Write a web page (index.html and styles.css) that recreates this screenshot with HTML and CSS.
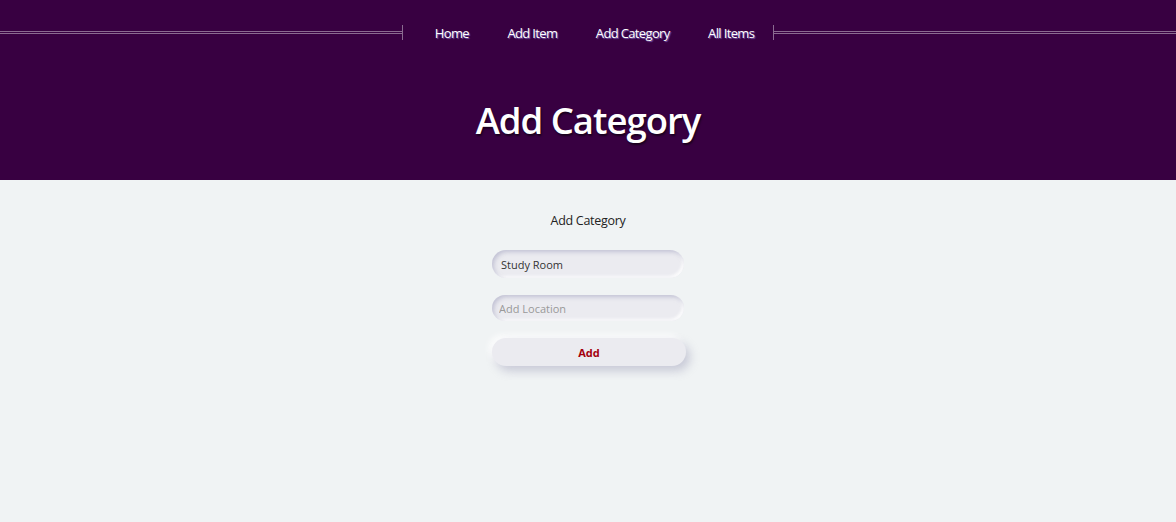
FILE: index.html
```html
<!DOCTYPE html>
<html>
<head>
<meta charset="utf-8">
<link rel="stylesheet" href="styles.css">
</head>
<body>
<header class="hero">
  <nav class="nav">
    <span class="rule rule-left"></span>
    <ul class="links">
      <li><a href="#">Home</a></li>
      <li><a href="#">Add Item</a></li>
      <li><a href="#">Add Category</a></li>
      <li><a href="#">All Items</a></li>
    </ul>
    <span class="rule rule-right"></span>
  </nav>
  <h1 class="title">Add Category</h1>
</header>
<main class="content">
  <form class="form">
    <p class="form-title">Add Category</p>
    <input class="field" type="text" value="Study Room">
    <input class="field" type="text" placeholder="Add Location">
    <button class="btn" type="button">Add</button>
  </form>
</main>
</body>
</html>
```
FILE: styles.css
```css
* { box-sizing: border-box; }
html, body { margin: 0; padding: 0; }
body {
  font-family: "Open Sans", "Noto Sans", sans-serif;
  background: #f0f3f4;
  width: 1176px;
  height: 522px;
  overflow: hidden;
}
.hero {
  background: #380041;
  height: 180px;
  padding-top: 17px;
}
.nav {
  display: flex;
  align-items: center;
  height: 30px;
}
.rule {
  flex: 1;
  height: 3px;
  border-top: 1px solid #8a6a90;
  border-bottom: 1px solid #8a6a90;
  position: relative;
}
.rule-left::after, .rule-right::before {
  content: "";
  position: absolute;
  top: -7px;
  width: 1px;
  height: 15px;
  background: #8a6a90;
}
.rule-left::after { right: 0; }
.rule-right::before { left: 0; }
.links {
  list-style: none;
  margin: 0;
  padding: 0 19px 0 32px;
  display: flex;
  gap: 38.5px;
}
.links a {
  color: #fff;
  text-decoration: none;
  font-size: 13px;
  letter-spacing: -0.65px;
  text-shadow: 1px 1px 1px rgba(140, 120, 220, 0.7);
}
.title {
  margin: 48px 0 0;
  text-align: center;
  color: #fff;
  font-size: 36.5px;
  font-weight: 600;
  letter-spacing: -1px;
  text-shadow: 1px 2px 2px rgba(0, 0, 0, 0.55);
}
.content {
  display: flex;
  justify-content: center;
}
.form {
  width: 192px;
  display: flex;
  flex-direction: column;
  align-items: stretch;
}
.form-title {
  margin: 32px 0 21px;
  text-align: center;
  font-size: 12.5px;
  color: #222;
  letter-spacing: -0.3px;
}
.field {
  height: 28px;
  border: none;
  border-radius: 14px;
  background: #ebebf0;
  box-shadow: inset 2px 2px 4px rgba(160, 160, 190, 0.55), inset -2px -2px 3px rgba(255, 255, 255, 0.9);
  padding: 0 9px;
  font-family: inherit;
  font-size: 11px;
  color: #333;
  margin-bottom: 17px;
  outline: none;
}
.field::placeholder { color: #999; }
.field + .field { padding-left: 7px; height: 26px; margin-bottom: 17px; }
.btn {
  height: 28px;
  width: 194px;
  border: none;
  border-radius: 14px;
  background: #ebebf0;
  box-shadow: 4px 5px 10px rgba(150, 150, 180, 0.45), -3px -3px 6px rgba(255, 255, 255, 0.9);
  font-family: inherit;
  font-size: 11px;
  font-weight: 700;
  color: #a3000c;
  padding-left: 6px;
}
```
